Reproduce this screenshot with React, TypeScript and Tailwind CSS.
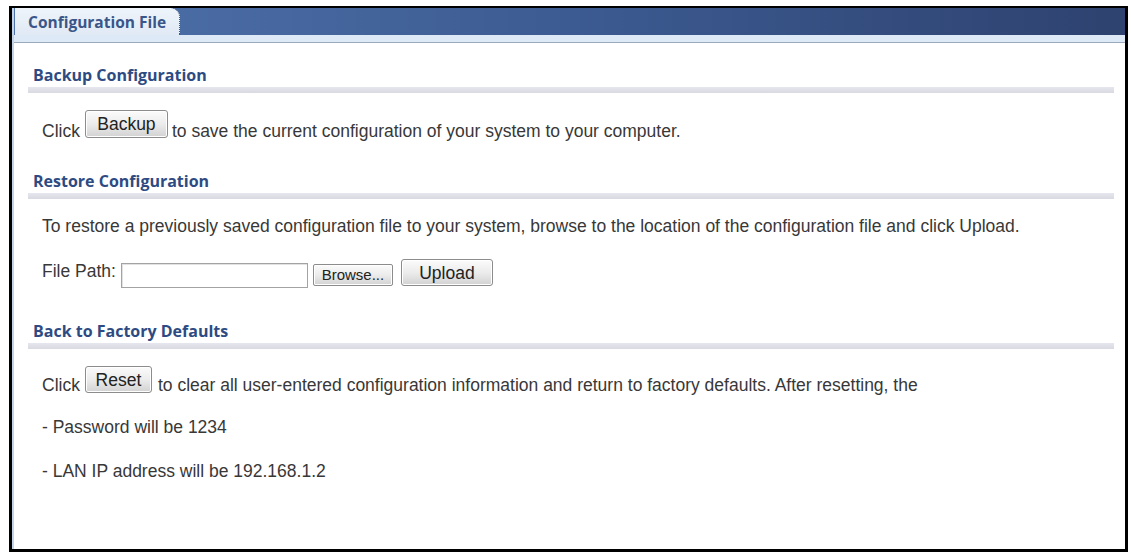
import React from "react";

function Btn({ children, className }: { children: React.ReactNode; className: string }) {
  return (
    <span
      className={`${className} inline-flex shrink-0 items-center justify-center rounded-[3px] border border-[#8c8c8c] bg-gradient-to-b from-[#fbfbfb] via-[#ececec] to-[#d2d2d2] text-[#222] shadow-[inset_0_0_0_1px_#ffffff]`}
    >
      {children}
    </span>
  );
}

function Heading({ children, top }: { children: React.ReactNode; top: string }) {
  return (
    <div className={top}>
      <div className="pl-[19px] text-[16px] font-bold leading-[20px] text-[#2d4b82] [font-family:'Open_Sans',sans-serif]">
        {children}
      </div>
      <div className="ml-[14px] mr-[11px] mt-[2px] h-[6px] bg-gradient-to-b from-[#e6e7ee] to-[#d8d9e1]" />
    </div>
  );
}

export default function App() {
  return (
    <div className="h-[556px] w-[1131px] bg-white pl-[9px] pt-[6px] [font-family:'Liberation_Sans',Arial,sans-serif]">
      <div className="flex h-[546px] w-[1119px] flex-col border-b-[3px] border-l-[3px] border-r-[3px] border-t-2 border-black">
        <div className="flex h-full flex-col border-l-2 border-[#c3d4e8]">
          {/* tab bar */}
          <div className="flex h-[27px] bg-gradient-to-r from-[#4f72ab] via-[#3c5b92] to-[#2e426f]">
            <div className="ml-[1px] flex h-[27px] w-[165px] items-center rounded-tr-[9px] border-r border-dotted border-[#4a5a70] bg-gradient-to-b from-[#eef4fa] to-[#e0eaf5] pl-[13px] pt-[3px] text-[15.5px] font-bold text-[#3a5689] [font-family:'Open_Sans',sans-serif]">
              Configuration File
            </div>
          </div>
          <div className="h-[8px] border-b border-[#9ba9bd] bg-[#dde9f7]" />

          <div className="flex flex-col text-[17.5px] leading-[20px] text-[#383838]">
            <Heading top="mt-[22px]">Backup Configuration</Heading>
            <div className="mt-[17px] flex h-[28px] items-start pl-[28px]">
              <span className="mt-[11px]">Click</span>
              <Btn className="ml-[5px] h-[28px] w-[83px]">Backup</Btn>
              <span className="ml-[4px] mt-[11px]">to save the current configuration of your system to your computer.</span>
            </div>

            <Heading top="mt-[33px]">Restore Configuration</Heading>
            <div className="mt-[17px] pl-[28px]">
              To restore a previously saved configuration file to your system, browse to the location of the configuration file and click Upload.
            </div>
            <div className="mt-[23px] flex h-[29px] items-start pl-[28px]">
              <span className="mt-[2px]">File Path:</span>
              <span className="ml-[5px] mt-[4px] h-[25px] w-[187px] shrink-0 border border-[#a3a3a3] bg-white shadow-[inset_1px_1px_0_#e2e2e2]" />
              <Btn className="ml-[5px] mt-[5px] h-[22px] w-[80px] !rounded-[2px] text-[15px]">Browse...</Btn>
              <Btn className="ml-[8px] h-[27px] w-[92px]">Upload</Btn>
            </div>

            <Heading top="mt-[33px]">Back to Factory Defaults</Heading>
            <div className="mt-[17px] flex h-[27px] items-start pl-[28px]">
              <span className="mt-[9px]">Click</span>
              <Btn className="ml-[5px] h-[27px] w-[67px]">Reset</Btn>
              <span className="ml-[6px] mt-[9px]">
                to clear all user-entered configuration information and return to factory defaults. After resetting, the
              </span>
            </div>
            <div className="mt-[24px] pl-[28px]">- Password will be 1234</div>
            <div className="mt-[24px] pl-[28px]">- LAN IP address will be 192.168.1.2</div>
          </div>
        </div>
      </div>
    </div>
  );
}
